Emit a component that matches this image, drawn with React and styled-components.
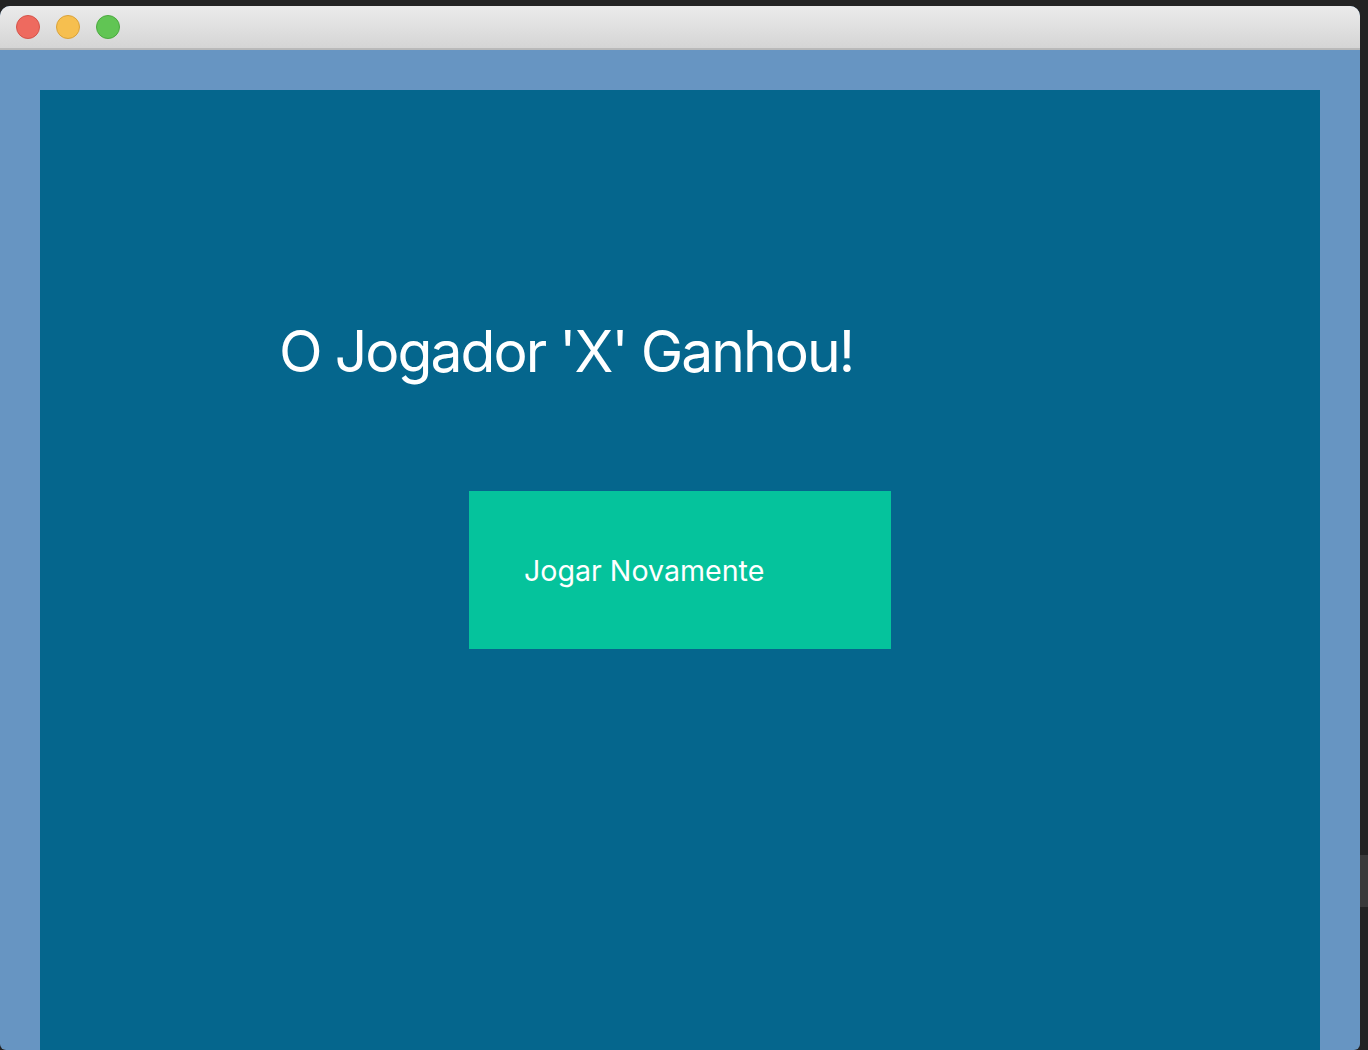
import styled, { createGlobalStyle } from "styled-components"

const GlobalStyle = createGlobalStyle`
  html, body {
    margin: 0;
    padding: 0;
    background: #232323;
    font-family: Inter, "Liberation Sans", sans-serif;
  }
`

function App() {
  return (
    <>
      <GlobalStyle />
      <Desktop>
        <Window>
          <TitleBar>
            <Light color="#ee6a5f" border="#d4544a" />
            <Light color="#f6bf4f" border="#d9a23a" />
            <Light color="#61c554" border="#4ba93f" />
          </TitleBar>
          <Content>
            <Panel>
              <Title>O Jogador 'X' Ganhou!</Title>
              <PlayButton>Jogar Novamente</PlayButton>
            </Panel>
          </Content>
        </Window>
        <Edge>
          <EdgeMark />
        </Edge>
      </Desktop>
    </>
  )
}

const Desktop = styled.div`
  display: flex;
  height: 1050px;
  overflow: hidden;
  padding-top: 6px;
  box-sizing: border-box;
`

const Window = styled.div`
  width: 1360px;
  display: flex;
  flex-direction: column;
  border-radius: 10px 10px 6px 6px;
  overflow: hidden;
  background: #6795c2;
`

const TitleBar = styled.div`
  height: 42px;
  flex-shrink: 0;
  display: flex;
  align-items: center;
  gap: 16px;
  padding-left: 16px;
  background: linear-gradient(#ebebeb, #d5d5d5);
  border-bottom: 2px solid #b9b9b9;
`

const Light = styled.span`
  width: 22px;
  height: 22px;
  border-radius: 50%;
  background: ${(props) => props.color};
  border: 1px solid ${(props) => props.border};
`

const Content = styled.div`
  flex: 1;
  padding: 40px 40px 0;
  display: flex;
`

const Panel = styled.div`
  flex: 1;
  background: #05668d;
  display: flex;
  flex-direction: column;
  padding-top: 228px;
`

const Title = styled.h1`
  margin: 0 0 0 239px;
  color: #fff;
  font-size: 57px;
  font-weight: 400;
  line-height: 68px;
  letter-spacing: -1.95px;
`

const PlayButton = styled.button`
  align-self: center;
  margin-top: 105px;
  width: 422px;
  height: 158px;
  border: none;
  background: #05c39c;
  color: #fff;
  font-family: Inter, "Liberation Sans", sans-serif;
  font-size: 28.6px;
  text-align: left;
  padding: 0 0 0 55px;
`

const Edge = styled.div`
  flex: 1;
  display: flex;
  flex-direction: column;
  padding-top: 849px;
`

const EdgeMark = styled.div`
  height: 52px;
  background: #3a3a3a;
`

export default App
